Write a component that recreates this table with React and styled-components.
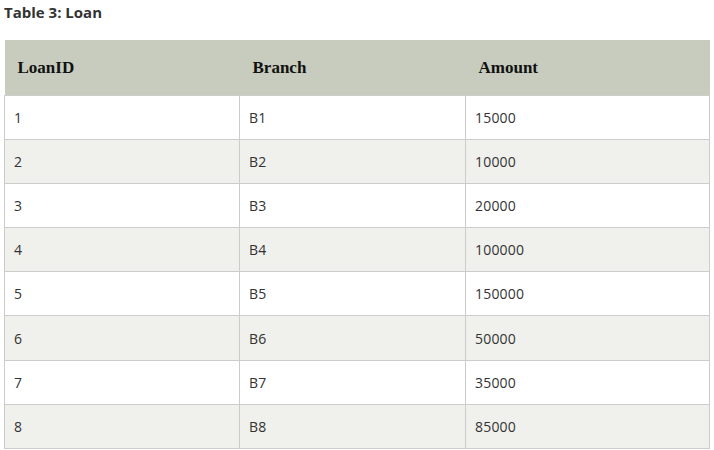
import React from "react";
import styled, { createGlobalStyle } from "styled-components";

const Global = createGlobalStyle`
  body { margin: 0; background: #fff; font-family: "Open Sans", "Noto Sans", sans-serif; }
`;

const Page = styled.div`
  padding: 2px 5px 0 4px;
`;

const Title = styled.div`
  font-family: "Open Sans", sans-serif;
  font-weight: 700;
  font-size: 15px;
  line-height: 20px;
  color: #333;
  margin-bottom: 18px;
`;

const Table = styled.table`
  width: 705px;
  border-collapse: collapse;
  table-layout: fixed;
`;

const Th = styled.th`
  background: #c8ccbe;
  font-family: "Liberation Serif", serif;
  font-weight: 700;
  font-size: 17px;
  color: #111;
  text-align: left;
  height: 55px;
  padding: 0 0 0 ${(p) => p.$pl || 12}px;
  border: none;
`;

const Tr = styled.tr`
  background: ${(p) => (p.$alt ? "#f0f0ec" : "#fff")};
`;

const Td = styled.td`
  border: 1px solid #ccc;
  padding: 0 9px;
  height: 43.1px;
  font-size: 14px;
  letter-spacing: 0.2px;
  color: #333;
`;

const rows = [
  ["1", "B1", "15000"],
  ["2", "B2", "10000"],
  ["3", "B3", "20000"],
  ["4", "B4", "100000"],
  ["5", "B5", "150000"],
  ["6", "B6", "50000"],
  ["7", "B7", "35000"],
  ["8", "B8", "85000"],
];

export default function App() {
  return (
    <Page>
      <Global />
      <Title>Table 3: Loan</Title>
      <Table>
        <colgroup>
          <col style={{ width: 235 }} />
          <col style={{ width: 226 }} />
          <col style={{ width: 244 }} />
        </colgroup>
        <thead>
          <tr>
            <Th $pl={13}>LoanID</Th>
            <Th $pl={13}>Branch</Th>
            <Th $pl={13}>Amount</Th>
          </tr>
        </thead>
        <tbody>
          {rows.map((r, i) => (
            <Tr key={i} $alt={i % 2 === 1}>
              {r.map((c, j) => (
                <Td key={j}>{c}</Td>
              ))}
            </Tr>
          ))}
        </tbody>
      </Table>
    </Page>
  );
}
